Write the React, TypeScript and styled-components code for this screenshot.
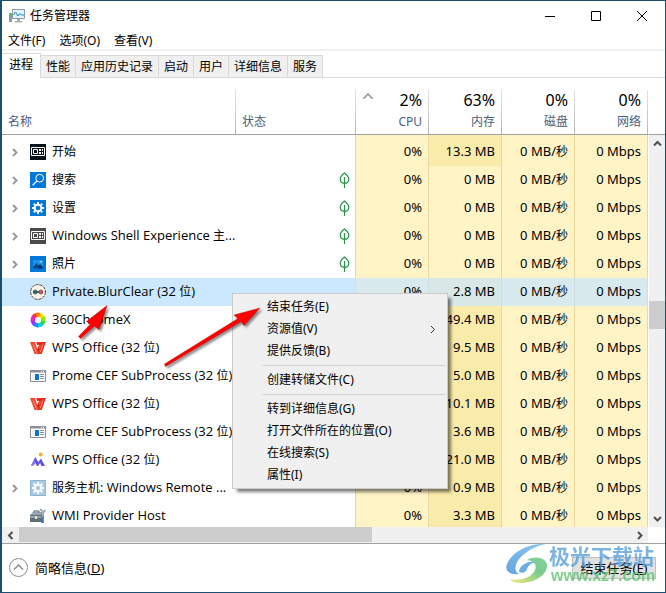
import React from "react";
import styled, { createGlobalStyle, css } from "styled-components";

const latin = `"Noto Sans", "Noto Sans CJK SC", sans-serif`;

const GlobalStyle = createGlobalStyle`
  * { box-sizing: border-box; }
  body { margin: 0; background: #fff; color: #000; font: 12px/16px ${latin}; }
  button { font: inherit; color: inherit; padding: 0; border: 0; background: none; }
  svg { display: block; flex: none; }
`;

const Window = styled.div`
  position: relative;
  display: flex;
  flex-direction: column;
  height: 100vh;
  overflow: hidden;
  border: 1px solid #1a4f70;
  border-left-width: 2px;
`;

const TitleBar = styled.header`
  display: flex;
  align-items: center;
  gap: 5px;
  height: 29px;
  padding-left: 7px;
`;

const Title = styled.h1`
  flex: 1;
  margin: 0;
  font: inherit;
`;

const WindowControls = styled.div`
  display: flex;
`;

const ControlButton = styled.button`
  display: flex;
  align-items: center;
  justify-content: center;
  width: 46px;
  height: 29px;
`;

const MenuBar = styled.nav`
  display: flex;
  gap: 14px;
  height: 21px;
  padding: 2px 0 0 6px;
  border-bottom: 2px solid #f0f0f0;
`;

const Tabs = styled.div`
  display: flex;
  align-items: flex-end;
  height: 27px;
  flex: none;
  border-bottom: 1px solid #d9d9d9;
`;

const Tab = styled.button<{ $active?: boolean }>`
  height: 22px;
  padding: 0 5px;
  border: 1px solid #d9d9d9;
  border-width: 1px 1px 0 0;
  background: #f0f0f0;
  ${(p) =>
    p.$active &&
    css`
      height: 25px;
      margin-bottom: -1px;
      padding: 0 7px 3px;
      background: #fff;
    `}
`;

const Main = styled.main`
  display: flex;
  flex: 1;
  min-height: 0;
  overflow: hidden;
`;

const TableArea = styled.div`
  flex: 1;
  min-width: 0;
`;

const ProcessTable = styled.table`
  width: 100%;
  border-collapse: separate;
  border-spacing: 0;
  table-layout: fixed;
  font-size: 13px;
  line-height: 16px;
`;

const HeadCell = styled.th<{ $width?: number; $right?: boolean }>`
  width: ${(p) => (p.$width ? `${p.$width}px` : "auto")};
  height: 57px;
  padding: 0 7px 4px 6px;
  border-bottom: 1px solid #a0a0a0;
  background: linear-gradient(#e6e6e6, #b4b4b4) right bottom / 1px 44px no-repeat;
  vertical-align: bottom;
  text-align: ${(p) => (p.$right ? "right" : "left")};
  font: 12px/16px ${latin};
  color: #4c607a;
`;

const HeadValue = styled.div`
  display: flex;
  justify-content: space-between;
  margin-bottom: 4px;
  font-size: 16px;
  line-height: 20px;
  color: #000;
`;

const HeadNumber = styled.span`
  margin-left: auto;
`;

const Row = styled.tr<{ $selected?: boolean }>`
  height: 28px;
  background: ${(p) => (p.$selected ? "#cce8ff" : "#fff")};
`;

const Spacer = styled.td<{ $tone?: "none" | "light" | "strong" }>`
  height: 3px;
  padding: 0;
  ${(p) =>
    p.$tone &&
    css`
      background: ${p.$tone === "strong" ? "#f9ecaa" : p.$tone === "light" ? "#fff4c6" : "#fff"};
      border-right: 1px solid #e9d6a1;
    `}
`;

const NameCell = styled.td`
  padding: 0 0 0 8px;
`;

const NameContent = styled.div`
  display: flex;
  align-items: center;
  gap: 6px;
  white-space: nowrap;
`;

const NameText = styled.span`
  padding-bottom: 2px;
  font-family: "Open Sans", "Noto Sans CJK SC", sans-serif;
`;

const Expander = styled.button`
  display: flex;
  width: 14px;
  height: 16px;
  align-items: center;
`;

const StatusCell = styled.td<{ $selected?: boolean }>`
  padding: 0 5px 0 0;
  border-right: 1px solid ${(p) => (p.$selected ? "#d6dfe4" : "#e9d6a1")};
`;

const StatusContent = styled.div`
  display: flex;
  justify-content: flex-end;
`;

const ValueCell = styled.td<{ $strong?: boolean; $selected?: boolean }>`
  padding: 0 6px 2px 0;
  border-right: 1px solid ${(p) => (p.$selected ? "#cfdfdf" : "#e9d6a1")};
  background: ${(p) =>
    p.$selected ? (p.$strong ? "#d8e8e6" : "#d9eaef") : p.$strong ? "#f9ecaa" : "#fff4c6"};
  text-align: right;
  white-space: nowrap;
`;

const Han = styled.span`
  font-size: 12px;
`;

const VerticalScroll = styled.div`
  display: flex;
  flex-direction: column;
  width: 17px;
  padding-top: 56px;
`;

const VerticalTrack = styled.div`
  display: flex;
  flex: 1;
  flex-direction: column;
  border-top: 1px solid #a0a0a0;
  border-left: 1px solid #fff;
  background: #f0f0f0;
`;

const ScrollButton = styled.button`
  display: flex;
  align-items: center;
  justify-content: center;
  width: 17px;
  height: 17px;
  flex: none;
`;

const VerticalThumb = styled.div`
  flex: 27;
  background: #cdcdcd;
`;

const Gap = styled.div<{ $grow: number }>`
  flex: ${(p) => p.$grow};
`;

const HorizontalScroll = styled.div`
  display: flex;
  height: 16px;
  flex: none;
  margin-right: 17px;
  align-items: stretch;
  background: #f0f0f0;
`;

const HorizontalThumb = styled.div`
  flex: 353;
  height: 15px;
  background: #cdcdcd;
`;

const Footer = styled.footer`
  position: relative;
  display: flex;
  align-items: center;
  justify-content: space-between;
  height: 49px;
  flex: none;
  padding: 0 9px 1px 7px;
  border-top: 1px solid #a0a0a0;
  font-size: 13px;
`;

const DetailsToggle = styled.button`
  display: flex;
  align-items: center;
  gap: 7px;
`;

const EndTaskButton = styled.button`
  width: 84px;
  height: 22px;
  border: 1px solid #bfbfbf;
  background: #e1e1e1;
`;

const Watermark = styled.div`
  position: absolute;
  right: 6px;
  top: 0;
  display: flex;
  pointer-events: none;
  opacity: 0.75;
`;

const WatermarkText = styled.div`
  display: flex;
  flex-direction: column;
  width: 110px;
  font: bold 21px/23px "Noto Sans CJK SC", sans-serif;
  color: #4f9bdc;
  white-space: nowrap;
`;

const WatermarkUrl = styled.span`
  padding-left: 2px;
  font: bold 16px/18px "Liberation Sans", sans-serif;
  color: #56c06a;
`;

const ContextMenu = styled.div`
  position: absolute;
  left: 230px;
  top: 292px;
  width: 216px;
  padding: 2px;
  border: 1px solid #ccc;
  background: #f0f0f0;
  box-shadow: 4px 4px 3px -1px rgba(0, 0, 0, 0.5);
`;

const MenuItem = styled.button`
  display: flex;
  align-items: center;
  justify-content: space-between;
  width: 100%;
  height: 22px;
  padding: 0 8px 0 32px;
  text-align: left;
`;

const Separator = styled.hr`
  height: 1px;
  margin: 3px 0 3px 28px;
  border: 0;
  background: #d0d0d0;
`;

const Arrows = styled.svg`
  position: absolute;
  left: 68px;
  top: 294px;
  pointer-events: none;
  filter: drop-shadow(2px 2px 1px rgba(0, 0, 0, 0.45));
`;

function Mixed({ text }: { text: string }) {
  return (
    <>
      {text.split(/([\u4e00-\u9fff]+)/).map((part, i) =>
        i % 2 ? <Han key={i}>{part}</Han> : part
      )}
    </>
  );
}

function Chevron({ dir, size = 9, color = "#505050", width = 2 }: {
  dir: "up" | "down" | "left" | "right"; size?: number; color?: string; width?: number;
}) {
  const paths = {
    up: "M1 6.5 4.5 3 8 6.5",
    down: "M1 3 4.5 6.5 8 3",
    left: "M6.5 1 3 4.5 6.5 8",
    right: "M3 1 6.5 4.5 3 8",
  };
  return (
    <svg width={size} height={size} viewBox="0 0 9 9" fill="none" stroke={color} strokeWidth={width}>
      <path d={paths[dir]} />
    </svg>
  );
}

type IconName = "start" | "search" | "settings" | "shell" | "photos" | "blur" | "chrome" | "wps" | "app" | "mountain" | "service" | "wmi";

const gear = (
  <>
    <circle cx="8" cy="8" r="3.3" fill="none" stroke="#fff" strokeWidth="2" />
    <path d="M8 2v2M8 12v2M2 8h2M12 8h2M3.8 3.8l1.4 1.4M10.8 10.8l1.4 1.4M3.8 12.2l1.4-1.4M10.8 5.2l1.4-1.4" stroke="#fff" strokeWidth="2" />
  </>
);

const wheel = ["#f33", "#f80", "#fd0", "#8e0", "#2d4", "#1ce", "#28f", "#93f", "#e2c"];

function AppIcon({ name }: { name: IconName }) {
  const panel = (bg: string) => (
    <>
      <path fill={bg} d="M0 0h16v16H0z" />
      <path d="M1.5 3.5h13v8h-13z" fill="none" stroke="#fff" />
      <path d="M3.5 5.5h4v4h-4z" fill="none" stroke="#fff" />
      <path d="M9 5h2v2H9zM12 5h1v2h-1zM9 8h2v2H9zM12 8h1v2h-1z" fill="#fff" />
    </>
  );
  const art: Record<IconName, React.ReactNode> = {
    start: panel("#05131f"),
    shell: panel("#4c4a48"),
    search: (
      <>
        <path fill="#0078d7" d="M0 0h16v16H0z" />
        <circle cx="9.7" cy="6.2" r="3.9" fill="none" stroke="#fff" />
        <path d="M6.9 9 2.5 13.4" stroke="#fff" strokeWidth="1.2" />
      </>
    ),
    settings: <><path fill="#0078d7" d="M0 0h16v16H0z" />{gear}</>,
    photos: (
      <>
        <path fill="#0078d7" d="M0 0h16v16H0z" />
        <path fill="#1f94e6" d="M3 4h10v8H3z" />
        <path fill="#064b8c" d="m3 11 3.5-4 5 5.500H3z" />
        <path fill="#0b3772" d="m8 10 2-2 3 3.200V12.500H9z" />
        <path fill="#fff" d="M10.500 5h1.300v1.300h-1.300z" />
      </>
    ),
    blur: (
      <>
        <circle cx="8" cy="8" r="7.4" fill="#fdf3e7" stroke="#4b403c" strokeDasharray="3 1" />
        <path d="M3 8h10" stroke="#333" strokeWidth="1.500" />
        <circle cx="5.200" cy="8" r="2" fill="#24787c" stroke="#333" strokeWidth=".6" />
        <circle cx="10.800" cy="8" r="2" fill="#ee5561" stroke="#333" strokeWidth=".6" />
      </>
    ),
    chrome: (
      <>
        {wheel.map((c, i) => (
          <path key={c} d="M8 .5A7.500 7.500 0 0 1 13.500 3L10.200 6A3 3 0 0 0 8 5z" fill={c} transform={`rotate(${i * 40 - 60} 8 8)`} />
        ))}
        <circle cx="8" cy="8" r="3" fill="#fff" />
      </>
    ),
    wps: (
      <>
        <path d="M0 2h5l2.200 7L9 5h3L8.500 14H4.500z" fill="#f5452d" />
        <path d="M6.200 2H16l-4.300 12H8.500L7 10l1.500-3.500 1.300 3L11.600 5H7z" fill="#e52c20" />
        <path d="m3 4.500 3.500 8M13 4.500l-3 8" stroke="#ffaf98" strokeWidth=".8" />
      </>
    ),
    app: (
      <>
        <path d="M.5 2.500h15v11H.5z" fill="#fff" stroke="#8a9096" />
        <path d="M0 2h16v2.500H0z" fill="#8a9096" />
        <path d="M11 2.700h1v1h-1zM13 2.700h1v1h-1z" fill="#fff" />
        <path d="M5 6h4v6H5z" fill="#0878d4" />
        <path d="M10 6.500h4M10 8.500h4M10 10.500h4" stroke="#8a9096" />
        <path d="M2 6h2v6H2z" fill="#eef2f4" />
      </>
    ),
    mountain: (
      <>
        <path d="M1 13.500 5.300 5l3 5L11 6.500l4 7.500h-3.500l-1.500-3-2 3H7l-2-3.500-1.500 3z" fill="#6253dc" />
        <path d="m1 13.500 4-6v4l-1.500 2z" fill="#8b7cf2" />
        <circle cx="10.700" cy="2.500" r="1.900" fill="#f7ac28" />
      </>
    ),
    service: (
      <>
        <path d="M.5.5h15v15H.5z" fill="#a9cbe8" stroke="#8eb4d5" />
        {gear}
      </>
    ),
    wmi: (
      <>
        <path d="m0 7 3-3h9v4H0z" fill="#99a6b0" />
        <path d="M0 7h12v7H0z" fill="#5f6e79" />
        <path d="M0 9h12" stroke="#ced7de" />
        <path d="M4 4.500V3h5v1.500" stroke="#475560" fill="none" />
        <path d="M5 8h2v3H5z" fill="#dce4e8" />
        <path d="M12.500 8v7" stroke="#3279bd" strokeWidth="2.600" />
        <path d="M10 1.500 12 4v5h1.500V5l2-2.500-.5-.5-2 1.500-2-2.500z" fill="#d9dfe3" stroke="#68747c" strokeWidth=".7" />
      </>
    ),
  };
  return <svg width="16" height="16" viewBox="0 0 16 16">{art[name]}</svg>;
}

const Leaf = () => (
  <svg width="11" height="17" viewBox="0 0 11 17" fill="none" stroke="#259247" strokeWidth="1.200">
    <path d="M5.500 1C3 3 1.200 4.700 1.200 7.300s1.800 4 4.300 4 4.300-1.400 4.300-4S8 3 5.500 1zM5.500 5v11" />
  </svg>
);

type Process = { name: string; icon: IconName; mem: string; expand?: boolean; leaf?: boolean; selected?: boolean };

const processes: Process[] = [
  { name: "开始", icon: "start", mem: "13.3", expand: true },
  { name: "搜索", icon: "search", mem: "0", expand: true, leaf: true },
  { name: "设置", icon: "settings", mem: "0", expand: true, leaf: true },
  { name: "Windows Shell Experience 主...", icon: "shell", mem: "0", expand: true, leaf: true },
  { name: "照片", icon: "photos", mem: "0", expand: true, leaf: true },
  { name: "Private.BlurClear (32 位)", icon: "blur", mem: "2.8", selected: true },
  { name: "360ChromeX", icon: "chrome", mem: "49.4" },
  { name: "WPS Office (32 位)", icon: "wps", mem: "9.5" },
  { name: "Prome CEF SubProcess (32 位)", icon: "app", mem: "5.0" },
  { name: "WPS Office (32 位)", icon: "wps", mem: "10.1" },
  { name: "Prome CEF SubProcess (32 位)", icon: "app", mem: "3.6" },
  { name: "WPS Office (32 位)", icon: "mountain", mem: "21.0" },
  { name: "服务主机: Windows Remote ...", icon: "service", mem: "0.9", expand: true },
  { name: "WMI Provider Host", icon: "wmi", mem: "3.3" },
];

const totals = [
  { value: "2%", label: "CPU", sorted: true },
  { value: "63%", label: "内存" },
  { value: "0%", label: "磁盘" },
  { value: "0%", label: "网络" },
];

const tabs = ["进程", "性能", "应用历史记录", "启动", "用户", "详细信息", "服务"];

export default function App() {
  return (
    <>
      <GlobalStyle />
      <Window>
        <TitleBar>
          <svg width="16" height="16" viewBox="0 0 16 16">
            <path d="M0 5h3v9H0z" fill="#8f999f" />
            <path d="M.500 6h1.500v2H.500z" fill="#4fc25a" />
            <path d="M3.500 1.500h12v9h-12z" fill="#dff4fd" stroke="#8f999f" />
            <path d="m4.500 7 2-3 2.500 4 2-2.500 1.500 1.500H15" fill="none" stroke="#1583b8" />
            <path d="M8 11h3v2h2v1.500H6V13h2z" fill="#a8afb3" />
          </svg>
          <Title>任务管理器</Title>
          <WindowControls>
            <ControlButton aria-label="最小化">
              <svg width="10" height="10"><path d="M0 5.500h10" stroke="#000" /></svg>
            </ControlButton>
            <ControlButton aria-label="最大化">
              <svg width="10" height="10"><path d="M.5.5h9v9h-9z" fill="none" stroke="#000" /></svg>
            </ControlButton>
            <ControlButton aria-label="关闭">
              <svg width="10" height="10"><path d="m0 0 10 10M10 0 0 10" stroke="#000" /></svg>
            </ControlButton>
          </WindowControls>
        </TitleBar>
        <MenuBar>
          <button>文件(F)</button>
          <button>选项(O)</button>
          <button>查看(V)</button>
        </MenuBar>
        <Tabs role="tablist">
          {tabs.map((t, i) => (
            <Tab key={t} role="tab" aria-selected={i === 0} $active={i === 0}>{t}</Tab>
          ))}
        </Tabs>
        <Main>
          <TableArea>
            <ProcessTable>
              <thead>
                <tr>
                  <HeadCell>名称</HeadCell>
                  <HeadCell $width={120}>状态</HeadCell>
                  {totals.map((t) => (
                    <HeadCell key={t.label} $width={73} $right>
                      <HeadValue>
                        {t.sorted && <Chevron dir="up" size={12} color="#7e8da3" width={1} />}
                        <HeadNumber>{t.value}</HeadNumber>
                      </HeadValue>
                      {t.label}
                    </HeadCell>
                  ))}
                </tr>
              </thead>
              <tbody>
                <tr aria-hidden="true">
                  <Spacer />
                  <Spacer $tone="none" />
                  <Spacer $tone="light" />
                  <Spacer $tone="strong" />
                  <Spacer $tone="light" />
                  <Spacer $tone="light" />
                </tr>
                {processes.map((p, i) => (
                  <Row key={i} $selected={p.selected}>
                    <NameCell>
                      <NameContent>
                        <Expander as={p.expand ? "button" : "span"} aria-label={p.expand ? "展开" : undefined}>
                          {p.expand && <Chevron dir="right" color="#9a9a9a" width={2} />}
                        </Expander>
                        <AppIcon name={p.icon} />
                        <NameText><Mixed text={p.name} /></NameText>
                      </NameContent>
                    </NameCell>
                    <StatusCell $selected={p.selected}>
                      <StatusContent>{p.leaf && <Leaf />}</StatusContent>
                    </StatusCell>
                    <ValueCell $selected={p.selected}>0%</ValueCell>
                    <ValueCell $selected={p.selected} $strong={p.mem !== "0"}>{p.mem} MB</ValueCell>
                    <ValueCell $selected={p.selected}><Mixed text="0 MB/秒" /></ValueCell>
                    <ValueCell $selected={p.selected}>0 Mbps</ValueCell>
                  </Row>
                ))}
              </tbody>
            </ProcessTable>
          </TableArea>
          <VerticalScroll>
            <VerticalTrack>
              <ScrollButton aria-label="向上滚动"><Chevron dir="up" /></ScrollButton>
              <Gap $grow={149} />
              <VerticalThumb />
              <Gap $grow={181} />
              <ScrollButton aria-label="向下滚动"><Chevron dir="down" /></ScrollButton>
            </VerticalTrack>
          </VerticalScroll>
        </Main>
        <HorizontalScroll>
          <ScrollButton aria-label="向左滚动"><Chevron dir="left" /></ScrollButton>
          <HorizontalThumb />
          <Gap $grow={259} />
          <ScrollButton aria-label="向右滚动"><Chevron dir="right" /></ScrollButton>
        </HorizontalScroll>
        <Footer>
          <DetailsToggle>
            <svg width="19" height="19" viewBox="0 0 19 19" fill="none" stroke="#8b8b8b">
              <circle cx="9.500" cy="9.500" r="9" />
              <path d="m5 11.500 4.500-4.500 4.500 4.500" strokeWidth="1.500" />
            </svg>
            <span>简略信息(<u>D</u>)</span>
          </DetailsToggle>
          <EndTaskButton>结束任务(<u>E</u>)</EndTaskButton>
          <Watermark>
            <svg width="44" height="40" viewBox="0 0 44 40">
              <defs>
                <linearGradient id="leafGreen" x1="0" y1="1" x2="1" y2="0">
                  <stop offset="0" stopColor="#f1e44b" />
                  <stop offset=".6" stopColor="#4dbb67" />
                  <stop offset="1" stopColor="#5bc478" />
                </linearGradient>
                <linearGradient id="swooshBlue" x1="1" y1="0" x2="0" y2="1">
                  <stop offset="0" stopColor="#62b5f0" />
                  <stop offset="1" stopColor="#3388d2" />
                </linearGradient>
              </defs>
              <path d="M41 0C23-1 6 9 2 20c-3 8 4 11 12 10C8 27 10 18 18 11 24 6 31 2 41 0z" fill="url(#swooshBlue)" />
              <path d="M22 16c9-5 19-2 20 5 1 9-12 18-26 18-5 0-9-1-11-4 8 2 19 0 24-7 4-6 1-11-7-12z" fill="url(#leafGreen)" />
              <path d="M14 28c0-6 8-11 16-10-5 2-7 4-8 7s-4 5-8 3z" fill="#3c94dc" />
            </svg>
            <WatermarkText>
              极光下载站
              <WatermarkUrl>www.xz7.com</WatermarkUrl>
            </WatermarkText>
          </Watermark>
        </Footer>
        <ContextMenu role="menu">
          <MenuItem role="menuitem">结束任务(E)</MenuItem>
          <MenuItem role="menuitem">资源值(V)<Chevron dir="right" color="#333" width={1} /></MenuItem>
          <MenuItem role="menuitem">提供反馈(B)</MenuItem>
          <Separator />
          <MenuItem role="menuitem">创建转储文件(C)</MenuItem>
          <Separator />
          <MenuItem role="menuitem">转到详细信息(G)</MenuItem>
          <MenuItem role="menuitem">打开文件所在的位置(O)</MenuItem>
          <MenuItem role="menuitem">在线搜索(S)</MenuItem>
          <MenuItem role="menuitem">属性(I)</MenuItem>
        </ContextMenu>
        <Arrows width="200" height="80" viewBox="70 295 200 80" aria-hidden="true">
          <g fill="#f00" stroke="#b00000" strokeWidth=".4">
            <path d="M78.500 336.500 90.500 324l-4-2.500L107 305.500l-8 24-4.500-3.500-14 12.500z" />
            <path d="M164.500 364 238 318.500l-4-3.500 26-7-16 17.500-3-4-75.500 45z" />
          </g>
        </Arrows>
      </Window>
    </>
  );
}
